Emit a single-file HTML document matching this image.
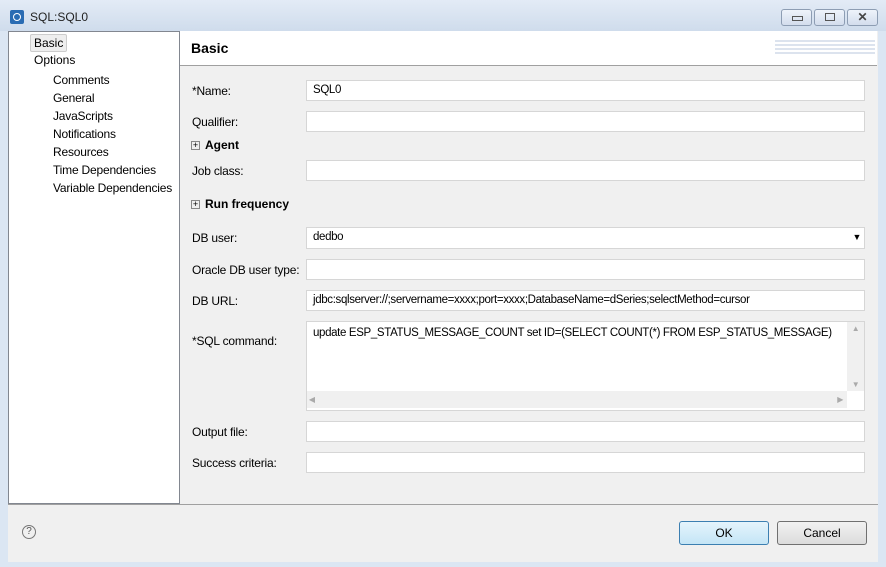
<!DOCTYPE html>
<html><head><style>
body{margin:0;width:886px;height:567px;background:#dbe6f3;font-family:"Liberation Sans",sans-serif;font-size:12px;color:#000;position:relative;overflow:hidden}
.a{position:absolute}
.tb{left:0;top:0;width:886px;height:31px;background:linear-gradient(#e3ebf6,#cfdcec)}
.win{left:8px;top:31px;width:870px;height:531px;background:#f0f0f0}
.tree{left:8px;top:31px;width:170px;height:471px;background:#fff;border:1px solid #828790}
.hdr{left:180px;top:31px;width:697px;height:34px;background:#fff;border-bottom:1px solid #a0a0a0}
.lbl{left:192px;letter-spacing:-0.2px}
.f{left:306px;width:551px;height:19px;background:#fff;border:1px solid #d6d6d6;line-height:19px;padding-left:6px;font-size:11.5px;letter-spacing:-0.35px;white-space:nowrap;overflow:hidden}
.wb{top:9px;width:29px;height:15px;border:1px solid #8d9db3;border-radius:3px;background:linear-gradient(#eef3fa,#d3dded)}
.btn{top:521px;height:22px;border:1px solid #707070;border-radius:3px;background:linear-gradient(#f2f2f2,#dcdcdc);text-align:center;line-height:22px}
.pl{width:7px;height:7px;border:1px solid #888;font-size:9px;line-height:7px;text-align:center;left:191px}
</style></head><body>
<div class="a tb"></div>
<div class="a" style="left:10px;top:10px;width:14px;height:14px;background:#2a6cb3;border-radius:2px"><div class="a" style="left:3px;top:3px;width:6px;height:6px;border:1px solid #fff;border-radius:50%"></div></div>
<div class="a" style="left:30px;top:10px;font-size:12px;color:#222">SQL:SQL0</div>
<div class="a wb" style="left:781px"><div class="a" style="left:10px;top:6px;width:9px;height:3px;border:1px solid #555"></div></div>
<div class="a wb" style="left:814px"><div class="a" style="left:10px;top:3px;width:8px;height:6px;border:1px solid #555"></div></div>
<div class="a wb" style="left:847px;text-align:center;line-height:15px;font-weight:bold;color:#444">✕</div>
<div class="a win"></div>
<div class="a tree"></div>
<div class="a" style="left:30px;top:34px;padding:1px 3px;background:#eee;border:1px solid #ccc;border-radius:2px">Basic</div>
<div class="a" style="left:34px;top:53px">Options</div>
<div class="a" style="left:53px;top:71px;line-height:18px;letter-spacing:-0.2px">Comments<br>General<br>JavaScripts<br>Notifications<br>Resources<br>Time Dependencies<br>Variable Dependencies</div>
<div class="a hdr"></div>
<div class="a" style="left:191px;top:40px;font-size:14px;font-weight:bold">Basic</div>
<div class="a" style="left:775px;top:40px;width:100px;height:16px;background:repeating-linear-gradient(#cdd7e6 0 2px,transparent 2px 4px);opacity:.7"></div>
<div class="a lbl" style="top:84px">*Name:</div><div class="a f" style="top:80px">SQL0</div>
<div class="a lbl" style="top:115px">Qualifier:</div><div class="a f" style="top:111px"></div>
<div class="a pl" style="top:141px">+</div><div class="a" style="left:205px;top:138px;font-weight:bold">Agent</div>
<div class="a lbl" style="top:164px">Job class:</div><div class="a f" style="top:160px"></div>
<div class="a pl" style="top:200px">+</div><div class="a" style="left:205px;top:197px;font-weight:bold">Run frequency</div>
<div class="a lbl" style="top:231px">DB user:</div><div class="a f" style="top:227px;height:20px">dedbo<span class="a" style="right:3px;top:0;font-size:9px">▼</span></div>
<div class="a lbl" style="top:263px">Oracle DB user type:</div><div class="a f" style="top:259px"></div>
<div class="a lbl" style="top:294px">DB URL:</div><div class="a f" style="top:290px">jdbc:sqlserver://;servername=xxxx;port=xxxx;DatabaseName=dSeries;selectMethod=cursor</div>
<div class="a lbl" style="top:334px">*SQL command:</div>
<div class="a f" style="top:321px;height:87px;line-height:20px;padding-top:1px">update ESP_STATUS_MESSAGE_COUNT set ID=(SELECT COUNT(*) FROM ESP_STATUS_MESSAGE)
<div class="a" style="left:0;top:69px;width:540px;height:17px;background:#f0f0f0;font-size:8px;color:#aaa;line-height:17px">&nbsp;◀<span class="a" style="right:4px">▶</span></div>
<div class="a" style="right:0;top:0;width:17px;height:69px;background:#f0f0f0;font-size:8px;color:#aaa;text-align:center;line-height:14px">▲<br><br><br><br>▼</div></div>
<div class="a lbl" style="top:425px">Output file:</div><div class="a f" style="top:421px"></div>
<div class="a lbl" style="top:456px">Success criteria:</div><div class="a f" style="top:452px"></div>
<div class="a" style="left:8px;top:504px;width:870px;border-top:1px solid #a0a0a0"></div>
<div class="a" style="left:22px;top:525px;width:12px;height:12px;border:1px solid #777;border-radius:50%;font-size:10px;text-align:center;line-height:12px;color:#555">?</div>
<div class="a btn" style="left:679px;width:88px;border-color:#3c7fb1;background:linear-gradient(#e5f4fc,#c4e5f6)">OK</div>
<div class="a btn" style="left:777px;width:88px">Cancel</div>
</body></html>
